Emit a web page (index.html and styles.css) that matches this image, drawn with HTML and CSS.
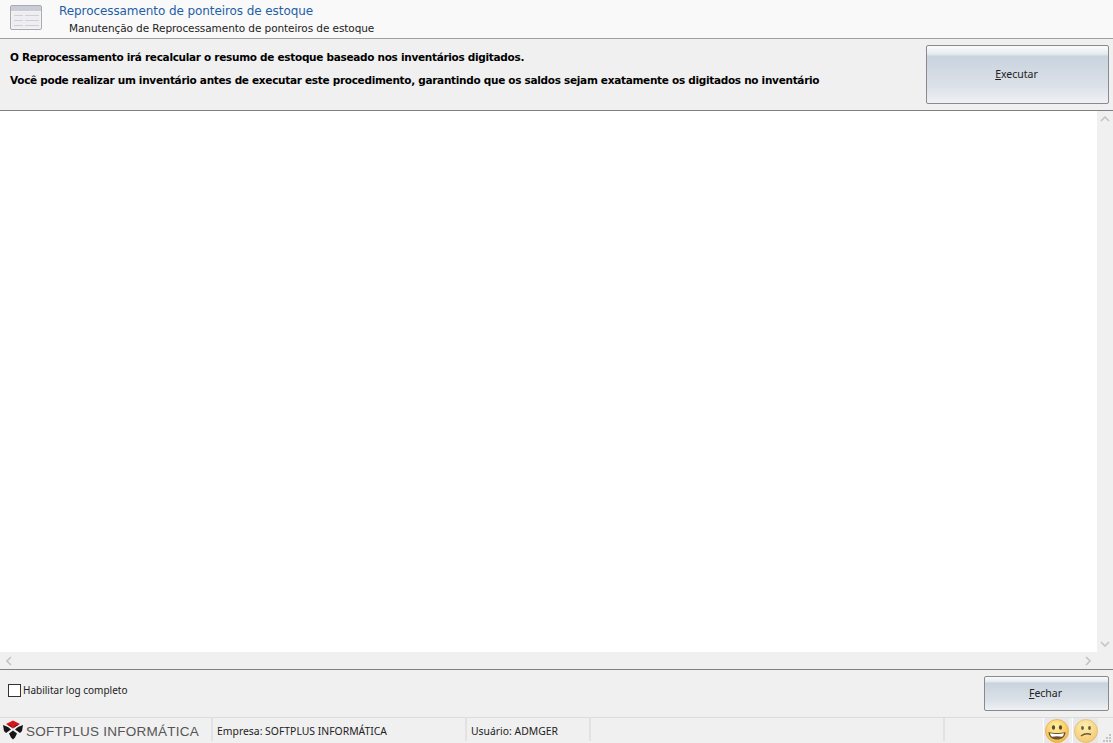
FILE: index.html
```html
<!DOCTYPE html>
<html lang="pt">
<head>
<meta charset="utf-8">
<title>Reprocessamento de ponteiros de estoque</title>
<link rel="stylesheet" href="styles.css">
</head>
<body>
<div class="app">
  <header class="header">
    <svg class="header-icon" width="34" height="28" viewBox="0 0 34 28">
      <rect x="1.5" y="2.5" width="31" height="24" rx="1.5" fill="#f3f3f6" stroke="#a9a9ae"/>
      <rect x="2" y="3" width="30" height="5" fill="#c9cbd6"/>
      <rect x="3" y="9" width="28" height="16" fill="#eeeef2"/>
      <path d="M5 12.5h9M16 12.5h14M5 17.5h9M16 17.5h14M5 22.5h9M16 22.5h14" stroke="#cfcfd4" fill="none"/>
    </svg>
    <div class="header-text">
      <div class="title">Reprocessamento de ponteiros de estoque</div>
      <div class="subtitle">Manutenção de Reprocessamento de ponteiros de estoque</div>
    </div>
  </header>
  <section class="info">
    <div class="info-text">
      <p>O Reprocessamento irá recalcular o resumo de estoque baseado nos inventários digitados.</p>
      <p>Você pode realizar um inventário antes de executar este procedimento, garantindo que os saldos sejam exatamente os digitados no inventário</p>
    </div>
    <button class="btn btn-run" type="button"><span class="key">E</span>xecutar</button>
  </section>
  <section class="log">
    <div class="log-main">
      <div class="log-area"></div>
      <div class="vscroll">
        <svg width="10" height="6" viewBox="0 0 10 6"><path d="M1 5l4-4 4 4" class="chev"/></svg>
        <svg width="10" height="6" viewBox="0 0 10 6"><path d="M1 1l4 4 4-4" class="chev"/></svg>
      </div>
    </div>
    <div class="hscroll">
      <svg width="6" height="10" viewBox="0 0 6 10"><path d="M5 1L1 5l4 4" class="chev"/></svg>
      <svg width="6" height="10" viewBox="0 0 6 10"><path d="M1 1l4 4-4 4" class="chev"/></svg>
    </div>
  </section>
  <section class="actions">
    <label class="check"><span class="box"></span>Habilitar log completo</label>
    <button class="btn btn-close" type="button"><span class="key">F</span>echar</button>
  </section>
  <footer class="status">
    <div class="cell cell-logo">
      <svg width="20" height="20" viewBox="0 0 20 20">
        <path d="M10 0.5l7 3.5-7 4-7-4z" fill="#d8141c"/>
        <path d="M4 4.5l3 0.5 3 3 3-3 3-0.5-6 4z" fill="#7a1015"/>
        <path d="M0 5l5 2 3 2.5-5 3.5L1 11zM20 5l-5 2-3 2.5 5 3.5 2-2z" fill="#161616"/>
        <path d="M10 10.5l4 3-2 4-2 2-2-2-2-4z" fill="#161616"/>
      </svg>
      <span class="brand">SOFTPLUS INFORMÁTICA</span>
    </div>
    <div class="cell cell-company">Empresa: SOFTPLUS INFORMÁTICA</div>
    <div class="cell cell-user">Usuário: ADMGER</div>
    <div class="cell cell-gap"></div>
    <div class="cell cell-faces">
      <span class="face-box">
        <svg width="24" height="24" viewBox="0 0 24 24">
          <circle cx="12" cy="12" r="11.5" fill="url(#fy)" stroke="#e0a030" stroke-width=".6"/>
          <ellipse cx="8.5" cy="8.5" rx="1.6" ry="2.2" fill="#5a4a30"/>
          <ellipse cx="15.5" cy="8.5" rx="1.6" ry="2.2" fill="#5a4a30"/>
          <path d="M3.5 13c4 1.4 13 1.4 17 0c0 5-3.8 7.5-8.5 7.5s-8.5-2.5-8.5-7.5z" fill="#6a5230"/>
          <path d="M5 14.3c4 1 10 1 14 0c-.3 1.7-1 2.8-2 3.5c-3-.7-7-.7-10 0c-1-.7-1.700-1.800-2-3.500z" fill="#fff"/>
          <defs><radialGradient id="fy" cx=".45" cy=".3" r=".8"><stop offset="0" stop-color="#fff2a0"/><stop offset="1" stop-color="#f3b03a"/></radialGradient></defs>
        </svg>
      </span>
      <span class="face-box">
        <svg width="24" height="24" viewBox="0 0 24 24">
          <circle cx="12" cy="12" r="11.5" fill="url(#fz)" stroke="#e0b060" stroke-width=".6"/>
          <ellipse cx="8.5" cy="9" rx="1.4" ry="2" fill="#6a5a3a"/>
          <ellipse cx="15.5" cy="9" rx="1.4" ry="2" fill="#6a5a3a"/>
          <path d="M7 17c3-2.2 7-2.6 10-1.5" fill="none" stroke="#6a5a3a" stroke-width="1.4"/>
          <defs><radialGradient id="fz" cx=".45" cy=".3" r=".8"><stop offset="0" stop-color="#fdf0b0"/><stop offset="1" stop-color="#f2c46a"/></radialGradient></defs>
        </svg>
      </span>
    </div>
    <svg class="grip" width="10" height="10" viewBox="0 0 10 10"><path d="M7 1h2v2H7zM4 4h2v2H4zM7 4h2v2H7zM1 7h2v2H1zM4 7h2v2H4zM7 7h2v2H7z" fill="#c4c4c4"/></svg>
  </footer>
</div>
</body>
</html>
```
FILE: styles.css
```css
* { box-sizing: border-box; }
html, body { margin: 0; padding: 0; height: 100%; overflow: hidden; }
body { font-family: "DejaVu Sans", Verdana, sans-serif; color: #000; background: #f0f0f0; }
.app { display: flex; flex-direction: column; height: 743px; width: 1113px; }

.header { height: 39px; flex: none; display: flex; background: #f9f9f9; border-bottom: 1px solid #a0a0a0; padding: 3px 0 0 9px; }
.header-icon { flex: none; }
.header-text { margin-left: 16px; padding-top: 1px; }
.title { font-size: 12px; line-height: 15px; color: #1f5fa6; letter-spacing: -0.08px; }
.subtitle { font-size: 10.5px; line-height: 14px; margin: 2px 0 0 10px; color: #222; letter-spacing: -0.08px; }

.info { height: 72px; flex: none; display: flex; justify-content: space-between; background: #f0f0f0; border-bottom: 1px solid #808080; padding: 6px 4px 6px 10px; }
.info-text { font-size: 10.5px; font-weight: 700; letter-spacing: -0.3px; }
.info-text p { margin: 0; line-height: 13px; padding-top: 6px; }
.info-text p + p { padding-top: 10px; }

.btn { font-family: "Noto Sans", sans-serif; font-size: 10.5px; line-height: 13px; color: #222; border: 1px solid #8a8a8a; border-radius: 2px; padding: 0 2px 0 0; background: linear-gradient(#fafbfc 0, #e6ebf0 14%, #c9d3de 18%, #dbe1e8 70%, #eef1f5 100%); }
.key { text-decoration: underline; }
.btn-run { width: 183px; height: 59px; flex: none; }

.log { flex: none; height: 559px; display: flex; flex-direction: column; border-bottom: 1px solid #808080; }
.log-main { flex: 1; display: flex; min-height: 0; }
.log-area { flex: 1; background: #fff; }
.vscroll { width: 16px; flex: none; background: #f0f0f0; display: flex; flex-direction: column; justify-content: space-between; align-items: center; padding: 5px 0; }
.hscroll { height: 17px; flex: none; background: #f0f0f0; display: flex; justify-content: space-between; align-items: center; padding: 0 22px 0 6px; }
.chev { fill: none; stroke: #c4c4c4; stroke-width: 1.6; }

.actions { flex: none; height: 48px; display: flex; justify-content: space-between; align-items: flex-start; padding: 6px 4px 0 8px; background: #f0f0f0; border-bottom: 1px solid #dcdcdc; }
.check { display: flex; align-items: center; font-family: "Noto Sans", sans-serif; font-size: 10px; color: #222; margin-top: 7px; }
.box { width: 13px; height: 13px; border: 1px solid #333; background: #fff; margin-right: 2px; }
.btn-close { width: 125px; height: 35px; }

.status { flex: 1; display: flex; align-items: stretch; background: #f0f0f0; font-family: "Noto Sans", sans-serif; font-size: 10.4px; color: #222; }
.cell { display: flex; align-items: center; border-right: 2px solid #e2e2e2; padding: 2px 0 0 4px; margin-bottom: 2px; }
.cell-logo { width: 213px; padding-left: 3px; padding-top: 0; }
.brand { font-family: "Liberation Sans", Arial, sans-serif; font-size: 13.5px; letter-spacing: 0.25px; color: #555; margin: 3px 0 0 3px; white-space: nowrap; }
.cell-company { width: 254px; }
.cell-user { width: 124px; }
.cell-gap { width: 354px; }
.cell-faces { border: 0; padding: 0 0 0 98px; margin: 0; gap: 3px; }
.face-box { display: flex; width: 26px; height: 25px; background: #e8e8e8; align-items: center; justify-content: center; border-left: 1px solid #fff; }
.grip { margin: 15px 0 0 4px; flex: none; }
```
